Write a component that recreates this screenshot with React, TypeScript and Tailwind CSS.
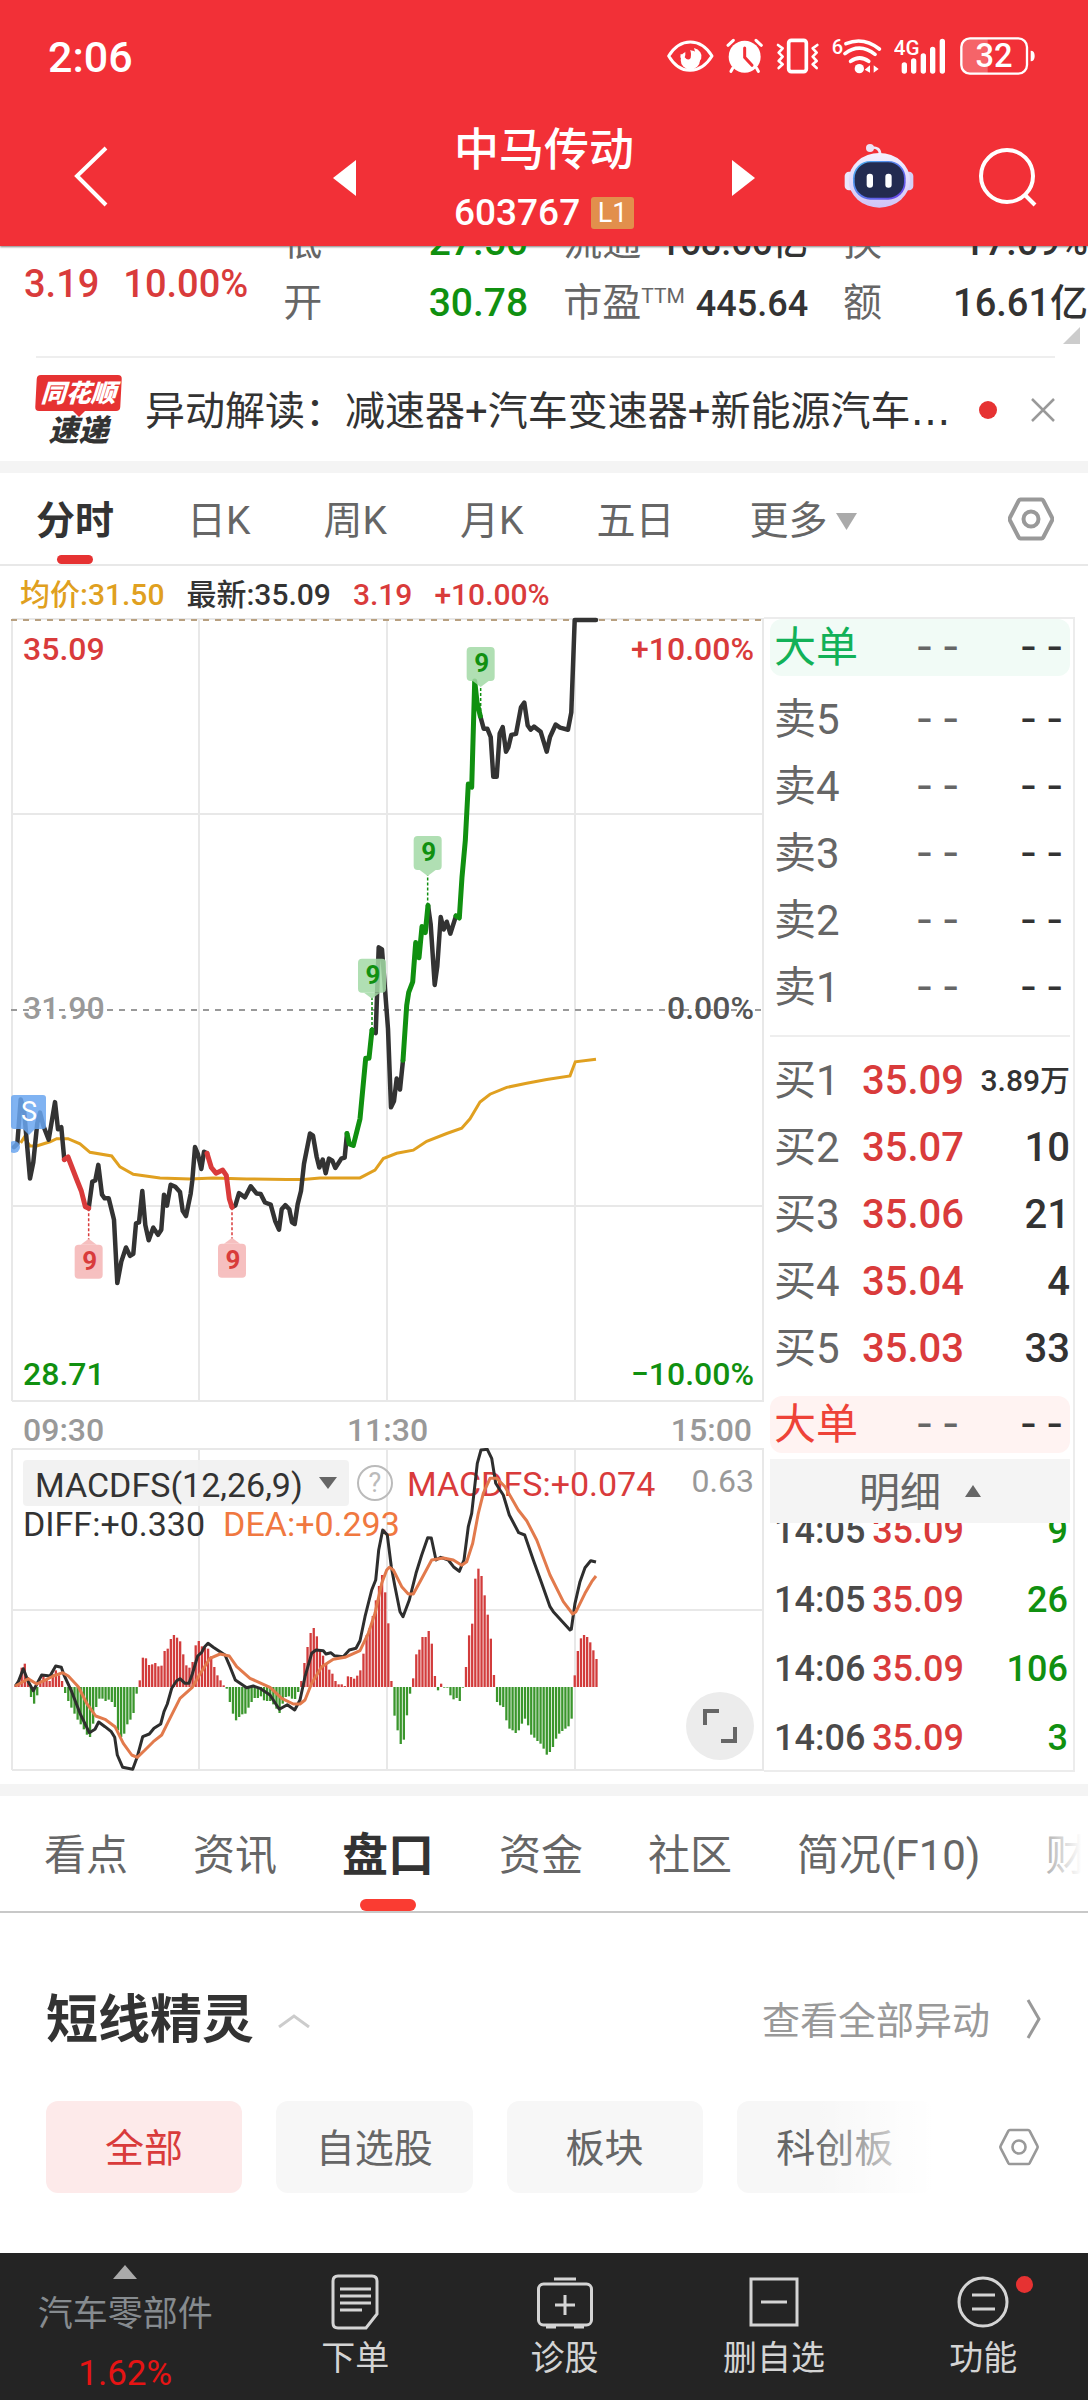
import React from 'react';

type Point = [number, number];

const RED = '#d93b3b';
const GREEN = '#109010';
const INK = '#333333';

/* ---------- chart data ---------- */

const priceSegments: { color: string; points: Point[] }[] = [
  { color: INK, points: [[42,1046],[52,1040],[62,955],[72,975],[90,1106],[100,1075],[112,1000],[120,980],[130,1005],[146,1032],[165,960],[174,1012],[184,1008],[193,1070]] },
  { color: INK, points: [[266,1163],[277,1112],[286,1110],[295,1080],[306,1137],[314,1144],[326,1144],[342,1185],[352,1306],[364,1265],[378,1238],[390,1254],[400,1250],[408,1192],[417,1190],[427,1130],[436,1195],[446,1224],[460,1200],[474,1214],[484,1204],[492,1137],[501,1158],[512,1118],[526,1122],[540,1132],[548,1168],[558,1178],[572,1135],[577,1110],[585,1046],[594,1060],[604,1088],[612,1055],[621,1058]] },
  { color: INK, points: [[696,1161],[706,1158],[717,1134],[735,1142],[752,1121],[770,1135],[782,1136],[795,1152],[812,1156],[826,1188],[837,1204],[845,1165],[856,1157],[868,1165],[876,1190],[884,1193],[893,1155],[903,1130],[912,1078],[930,1020],[939,1024],[950,1065],[958,1085],[968,1070],[977,1096],[987,1068],[997,1072],[1006,1086],[1024,1068],[1034,1066],[1041,1020]] },
  { color: INK, points: [[1116,822],[1127,828],[1136,664],[1146,668],[1164,820],[1173,970],[1182,958],[1190,915],[1200,936],[1209,880]] },
  { color: INK, points: [[1284,584],[1292,620],[1304,736],[1312,700],[1322,606],[1331,630],[1340,615],[1351,638],[1368,604]] },
  { color: INK, points: [[1441,222],[1451,246],[1462,246],[1472,262],[1480,338],[1490,338],[1499,255],[1508,243],[1518,290],[1525,282],[1534,258],[1548,256],[1563,205],[1573,196],[1583,240],[1592,248],[1602,242],[1622,252],[1640,290],[1650,262],[1667,238],[1680,244],[1704,248],[1714,215],[1724,38],[1788,38]] },
  { color: RED, points: [[193,1070],[204,1065],[230,1108],[244,1130],[256,1160],[266,1163]] },
  { color: RED, points: [[621,1058],[634,1085],[648,1096],[668,1090],[679,1100],[688,1145],[696,1161]] },
  { color: GREEN, points: [[1041,1020],[1048,1040],[1060,1043],[1080,992],[1097,876],[1107,876],[1116,822]] },
  { color: GREEN, points: [[1209,880],[1220,775],[1226,750],[1238,730],[1247,655],[1257,684],[1266,624],[1276,636],[1284,584]] },
  { color: GREEN, points: [[1368,604],[1378,608],[1386,530],[1396,460],[1405,352],[1415,358],[1424,155],[1431,195],[1441,222]] },
];

const averagePoints: Point[] = [[62,1038],[72,1028],[90,1044],[110,1044],[150,1036],[170,1030],[204,1030],[240,1040],[270,1056],[335,1063],[360,1084],[400,1098],[480,1105],[570,1107],[640,1105],[740,1107],[860,1108],[910,1108],[960,1105],[1080,1105],[1125,1090],[1150,1068],[1190,1058],[1240,1052],[1280,1035],[1340,1020],[1385,1010],[1410,992],[1440,960],[1470,945],[1520,932],[1580,924],[1640,917],[1710,910],[1726,883],[1788,878]];

const diffPoints: Point[] = [[46,858],[55,845],[70,806],[85,845],[100,872],[112,850],[125,825],[150,828],[167,798],[184,802],[192,825],[215,875],[240,940],[268,998],[285,988],[296,966],[315,980],[334,995],[344,1012],[352,1065],[368,1102],[398,1108],[412,1070],[428,1010],[448,1002],[462,985],[482,972],[492,935],[502,912],[515,865],[530,842],[540,836],[555,850],[567,850],[577,822],[593,768],[605,757],[614,740],[624,730],[640,742],[675,765],[690,800],[706,840],[740,863],[760,858],[782,866],[810,885],[838,928],[862,914],[884,930],[900,900],[915,830],[935,760],[948,750],[970,752],[978,762],[992,758],[1003,767],[1030,770],[1048,750],[1068,745],[1080,722],[1095,650],[1115,570],[1127,540],[1136,450],[1148,390],[1162,405],[1174,500],[1185,560],[1200,635],[1209,650],[1228,600],[1248,520],[1265,465],[1283,413],[1294,414],[1308,480],[1322,472],[1345,480],[1362,502],[1378,514],[1392,480],[1405,380],[1415,340],[1432,190],[1443,150],[1462,148],[1475,175],[1487,250],[1500,270],[1510,285],[1528,345],[1556,398],[1574,405],[1600,480],[1625,550],[1650,620],[1660,635],[1710,690],[1714,688],[1725,610],[1740,545],[1755,503],[1772,482],[1788,486]];

const deaPoints: Point[] = [[46,858],[85,836],[110,852],[140,838],[160,828],[188,818],[205,828],[235,860],[260,910],[287,948],[315,958],[345,980],[370,1030],[395,1065],[412,1072],[435,1050],[460,1025],[485,1005],[505,965],[540,895],[577,862],[600,822],[630,775],[660,762],[688,768],[710,800],[750,835],[810,862],[845,895],[880,912],[900,912],[915,900],[935,850],[965,800],[1000,778],[1035,772],[1080,752],[1105,700],[1125,640],[1145,550],[1160,510],[1168,502],[1180,510],[1205,560],[1225,582],[1240,582],[1260,545],[1295,480],[1330,474],[1360,480],[1385,496],[1400,485],[1418,430],[1435,340],[1450,280],[1470,235],[1490,235],[1515,260],[1555,330],[1580,362],[1610,420],[1650,525],[1690,605],[1718,642],[1728,635],[1755,580],[1775,545],[1788,528]];

const macdBars = [
  4,12,58,70,30,-30,-50,-25,20,35,22,18,38,50,35,18,-18,-42,-62,-80,-98,-112,-127,-143,-150,-110,-60,-35,-35,-42,-38,-45,-60,-130,-150,-140,-112,-98,-78,-20,
  20,88,86,66,68,72,62,64,108,115,144,156,148,137,98,65,58,75,125,138,122,118,115,92,60,35,20,5,-5,-45,-80,-100,-90,-82,-80,-62,-45,-33,-33,-28,-40,-42,-42,-52,-65,-78,-50,-30,-28,-35,-36,-15,
  18,72,120,162,177,152,108,94,72,52,40,18,8,8,3,32,30,25,34,50,100,155,177,213,260,303,336,284,191,18,-86,-130,-171,-158,-85,-20,
  26,98,112,150,150,168,130,33,-10,10,-2,-2,-25,-37,-33,-42,-2,60,155,190,325,355,333,275,217,145,36,-45,-55,-60,-100,-125,-130,-138,-130,-110,-95,-115,-143,-152,-162,-170,-185,-203,-195,-180,-155,-140,-132,-125,-118,-95,
  35,108,146,156,150,134,110,84,
];

const px = (x: number) => x / 3 - 11;
const priceY = (y: number) => y / 1.912 - 17;
const macdY = (y: number) => y / 3 - 48;

const polyline = (points: Point[], toY: (y: number) => number) =>
  points.map(([x, y]) => `${px(x).toFixed(1)},${toY(y).toFixed(1)}`).join(' ');

/* ---------- icons ---------- */

function HexIcon({ className, stroke }: { className: string; stroke: number }) {
  return (
    <svg className={className} viewBox="0 0 46 46" fill="none" stroke="#999" strokeWidth={stroke} strokeLinejoin="round" aria-hidden="true">
      <path d="M12.5 3.5h21a2 2 0 0 1 1.700 1L44 21.500a3 3 0 0 1 0 3L35.200 41.500a2 2 0 0 1-1.700 1h-21a2 2 0 0 1-1.700-1L2 24.500a3 3 0 0 1 0-3L10.800 4.500a2 2 0 0 1 1.700-1z" />
      <circle cx="23" cy="23" r="7.500" />
    </svg>
  );
}

function StatusIcons() {
  return (
    <div className="flex items-center gap-3 text-white" aria-label="系统状态">
      <svg className="h-[42px] w-[48px]" viewBox="16 45 144 126" fill="none">
        <path d="M24 108Q50 66 89 66T154 108Q128 150 89 151T24 108Z" stroke="#fff" strokeWidth="9" strokeLinejoin="round" />
        <path d="M60 102a32 26 0 1 0 40-18q10 24-12 28-14 1-16-12-6 4-12 2z" fill="#fff" />
        <circle cx="89" cy="120" r="29" fill="#fff" />
        <path d="M68 78q28 4 22 36-8 10-18-2 6-14-4-34z" fill="#f23037" />
      </svg>
      <svg className="h-[42px] w-[38px]" viewBox="200 45 114 126" fill="none" stroke="#fff" strokeLinecap="round">
        <circle cx="256" cy="110" r="48" fill="#fff" stroke="none" />
        <path d="M206 76l16-15M306 76l-16-15M220 145l-5 9M292 145l5 9" strokeWidth="9" />
        <path d="M256 84v28l22 24" stroke="#f23037" strokeWidth="9" />
      </svg>
      <svg className="h-[42px] w-[44px]" viewBox="353 45 132 126" fill="none" stroke="#fff" strokeLinejoin="round" strokeLinecap="round">
        <rect x="391" y="61" width="53" height="94" rx="8" strokeWidth="11" />
        <path d="M359 75l14 10-12 13 12 12-12 13 12 10-12 11M477 75l-14 10 12 13-12 12 12 13-12 10 12 11" strokeWidth="8" />
      </svg>
      <svg className="h-[42px] w-[50px]" viewBox="518 45 150 126" fill="none" stroke="#fff" strokeLinecap="round">
        <text x="517" y="101" fill="#fff" stroke="none" fontSize="60" fontWeight="500" className="font-['Roboto']">6</text>
        <path d="M560 71q52-22 100 16M557 101q44-34 90 2M574 124q27-20 54 0" strokeWidth="11" />
        <circle cx="600" cy="146" r="14" fill="#fff" stroke="none" />
        <path d="M632 136v22l-16-9zM643 136v22l15-11z" fill="#fff" stroke="none" />
      </svg>
      <svg className="h-[42px] w-[52px]" viewBox="702 45 156 126" fill="none" stroke="#fff" strokeLinecap="round">
        <text x="701" y="106" fill="#fff" stroke="none" fontSize="62" fontWeight="500" className="font-['Roboto']">4G</text>
        <path d="M733 135v18M761 123v30M790 108v45M818 88v65M847 64v89" strokeWidth="16" />
      </svg>
      <svg className="ml-0.5 h-[42px] w-[76px]" viewBox="897 45 228 126" fill="none">
        <path d="M925 53h55v110h-55q-26 0-26-26V79q0-26 26-26z" fill="#fff" opacity=".25" />
        <rect x="901" y="55" width="197" height="106" rx="26" stroke="#fff" strokeWidth="7" />
        <path d="M1109 92q12 0 12 16t-12 16z" fill="#fff" />
        <text x="999" y="142" textAnchor="middle" fill="#fff" fontSize="98" fontWeight="500" className="font-['Roboto']">32</text>
      </svg>
    </div>
  );
}

function Robot() {
  return (
    <svg className="h-[66px] w-[70px]" viewBox="550 366 210 198" aria-hidden="true">
      <defs>
        <linearGradient id="shell" x1="0" y1="0" x2="0" y2="1">
          <stop offset="0" stopColor="#f5f1ff" />
          <stop offset="1" stopColor="#cfc4f6" />
        </linearGradient>
        <linearGradient id="visor" x1="0" y1="0" x2="1" y2="1">
          <stop offset="0" stopColor="#4bb4f0" />
          <stop offset="1" stopColor="#6a3ee6" />
        </linearGradient>
      </defs>
      <path d="M628 380q32-4 30 22" fill="none" stroke="#efe9fc" strokeWidth="8" />
      <circle cx="628" cy="381" r="12" fill="#ece2f6" />
      <rect x="552" y="452" width="30" height="56" rx="13" fill="#eae6fb" />
      <rect x="728" y="452" width="30" height="56" rx="13" fill="#d5d0f6" />
      <ellipse cx="656" cy="478" rx="92" ry="82" fill="url(#shell)" />
      <rect x="577" y="420" width="158" height="116" rx="52" fill="url(#visor)" />
      <rect x="582" y="424" width="148" height="106" rx="48" fill="#232b50" />
      <rect x="618" y="458" width="19" height="42" rx="9" fill="#fff" />
      <rect x="674" y="458" width="19" height="42" rx="9" fill="#fff" />
    </svg>
  );
}

/* ---------- header ---------- */

function Header() {
  return (
    <header className="relative bg-[#f23037] text-white shadow-[0_1px_2px_rgba(0,0,0,0.5)]">
      <div className="flex h-[112px] items-center justify-between pl-12 pr-[52px]">
        <time className="pt-0.5 text-[43px] font-medium leading-none">2:06</time>
        <StatusIcons />
      </div>
      <div className="grid h-[134px] grid-cols-[1fr_auto_1fr] items-center pb-1">
        <button type="button" aria-label="返回" className="ml-[72px] w-10">
          <svg className="h-[66px] w-10" viewBox="0 0 40 66" fill="none" stroke="#fff" strokeWidth="4">
            <path d="M34 3L5 31l29 29" />
          </svg>
        </button>
        <div className="flex items-center gap-[98px]">
          <button type="button" aria-label="上一只">
            <svg className="h-9 w-[23px]" viewBox="0 0 23 36" fill="#fff"><path d="M23 0v36L0 18z" /></svg>
          </button>
          <div className="flex flex-col pt-2">
            <h1 className="text-[45px] font-medium leading-[62px]">中马传动</h1>
            <div className="flex items-center justify-between leading-[62px]">
              <span className="text-[37px] font-medium">603767</span>
              <span className="flex h-8 w-[43px] items-center justify-center rounded-[3px] bg-[#e28f4c] text-[27px] leading-none">L1</span>
            </div>
          </div>
          <button type="button" aria-label="下一只">
            <svg className="h-9 w-[23px]" viewBox="0 0 23 36" fill="#fff"><path d="M0 0v36l23-18z" /></svg>
          </button>
        </div>
        <div className="flex items-center justify-end gap-16 pr-[50px]">
          <button type="button" aria-label="智能助手" className="pb-1"><Robot /></button>
          <button type="button" aria-label="搜索">
            <svg className="h-[60px] w-[60px]" viewBox="0 0 60 60" fill="none" stroke="#fff" strokeWidth="4">
              <circle cx="29" cy="28" r="26" />
              <path d="M46 46l11 11" />
            </svg>
          </button>
        </div>
      </div>
    </header>
  );
}

function StatPair({ label, sup, value, className }: { label: string; sup?: string; value: string; className: string }) {
  return (
    <div className="flex h-[61px] items-center justify-between whitespace-nowrap">
      <dt className="flex text-[39px] leading-none text-[#666]">
        {label}
        {sup && <sup className="top-0 text-[21px] leading-6">{sup}</sup>}
      </dt>
      <dd className={className}>{value}</dd>
    </div>
  );
}

function Quote() {
  return (
    <section className="relative h-[110px] overflow-hidden">
      <div className="grid grid-cols-[248fr_245fr_245fr_245fr] gap-x-[35px]">
        <div className="flex h-[76px] items-center gap-6 whitespace-nowrap pl-6 text-[38px] font-medium text-[#d93b3b]">
          <span>3.19</span>
          <span>10.00%</span>
        </div>
        <dl className="-mt-[34px]">
          <StatPair label="低" value="27.50" className="text-[39px] font-medium text-[#109010]" />
          <StatPair label="开" value="30.78" className="text-[39px] font-medium text-[#109010]" />
        </dl>
        <dl className="-mt-[34px]">
          <StatPair label="流通" value="168.66亿" className="text-[36px] font-medium text-[#333]" />
          <StatPair label="市盈" sup="TTM" value="445.64" className="text-[36px] font-medium text-[#333]" />
        </dl>
        <dl className="-mt-[34px]">
          <StatPair label="换" value="17.09%" className="text-[38px] font-medium text-[#333]" />
          <StatPair label="额" value="16.61亿" className="text-[38px] font-medium text-[#333]" />
        </dl>
      </div>
      <svg className="absolute bottom-3 right-2 size-[17px]" viewBox="0 0 17 17" fill="#ccc"><path d="M17 0v17H0z" /></svg>
    </section>
  );
}

function News() {
  return (
    <section className="ml-9 mr-[33px] flex h-[105px] items-center border-t-2 border-[#eee]">
      <div className="flex w-[85px] flex-col items-center italic">
        <span className="flex h-9 w-full -skew-x-3 items-center justify-center rounded-[4px] bg-[#e63232] text-[25px] font-black leading-none text-white">同花顺</span>
        <svg className="h-1.5 w-3" viewBox="0 0 12 6" fill="#e63232"><path d="M0 0h12L6 6z" /></svg>
        <span className="text-[30px] font-black leading-[28px] text-[#333]">速递</span>
      </div>
      <a href="#news" className="ml-6 min-w-0 flex-1 overflow-hidden whitespace-nowrap pt-1 text-[40px] text-[#333]">
        异动解读：减速器+汽车变速器+新能源汽车<span className="font-['DejaVu_Sans']">…</span>
      </a>
      <span className="ml-2 size-[18px] rounded-full bg-[#e63232]" />
      <button type="button" aria-label="关闭" className="ml-[34px]">
        <svg className="size-6" viewBox="0 0 24 24" stroke="#999" strokeWidth="2.500"><path d="M1 1l22 22M23 1L1 23" /></svg>
      </button>
    </section>
  );
}

function ChartTabs() {
  const tabs = ['分时', '日K', '周K', '月K', '五日'];
  return (
    <nav className="flex h-[93px] items-stretch gap-[73px] border-b-2 border-[#e8e8e8] pl-9 pr-[34px] text-[39px] text-[#666]">
      {tabs.map((tab, i) => (
        <button key={tab} type="button" className={i === 0 ? 'relative pt-1.5 font-bold text-[#333]' : 'relative pt-1.5'}>
          {tab}
          {i === 0 && <span className="absolute bottom-0 left-1/2 h-[9px] w-9 -translate-x-1/2 rounded-full bg-[#e63232]" />}
        </button>
      ))}
      <button type="button" className="ml-0.5 flex items-center gap-2 pt-1.5">
        更多
        <svg className="h-[17px] w-[21px]" viewBox="0 0 21 17" fill="#aaa"><path d="M0 0h21L10.500 17z" /></svg>
      </button>
      <button type="button" aria-label="图表设置" className="ml-auto"><HexIcon className="size-[46px]" stroke={4} /></button>
    </nav>
  );
}

/* ---------- charts ---------- */

function Flag({ x, top, up, from }: { x: number; top: number; up?: boolean; from: number }) {
  const cx = px(x);
  const y = priceY(top);
  const color = up ? RED : GREEN;
  const fill = up ? '#f5b5b5' : '#a3daa6';
  return (
    <g>
      <line x1={cx} x2={cx} y1={priceY(from)} y2={up ? y - 5 : y + 39} stroke={color} strokeWidth="1.500" strokeDasharray="3 2" />
      <g opacity="0.850">
        <rect x={cx - 14} y={y} width="28" height="34" rx="4" fill={fill} />
        <path d={up ? `M${cx - 8} ${y}L${cx} ${y - 6}L${cx + 8} ${y}z` : `M${cx - 8} ${y + 34}L${cx} ${y + 40}L${cx + 8} ${y + 34}z`} fill={fill} />
      </g>
      <text x={cx + 1} y={y + 25} textAnchor="middle" fontSize="26" fontWeight="700" fill={color}>9</text>
    </g>
  );
}

function PriceChart() {
  return (
    <div className="relative">
      <svg className="block w-full" viewBox="0 0 753 785" fill="none" role="img" aria-label="分时走势图">
        <g stroke="#e8e8e8" strokeWidth="2">
          <path d="M1 2h752M1 197h752M1 589h752M1 784h752" />
          <path d="M1 2v782M188 2v782M376 2v782M564 2v782M752 2v782" />
        </g>
        <path d="M0 3h752" stroke="#b8a080" strokeWidth="2" strokeDasharray="6 6" />
        <path d="M0 393h752" stroke="#999" strokeWidth="2" strokeDasharray="6 6" />
        <polyline points={polyline(averagePoints, priceY)} stroke="#e0a020" strokeWidth="3" />
        {priceSegments.map((s, i) => (
          <polyline key={i} points={polyline(s.points, priceY)} stroke={s.color} strokeWidth={s.color === INK ? 4.5 : 5} strokeLinejoin="round" strokeLinecap="round" />
        ))}
        <Flag x={266} top={1233} from={1163} up />
        <Flag x={696} top={1231} from={1161} up />
        <Flag x={1116} top={686} from={822} />
        <Flag x={1283} top={451} from={584} />
        <Flag x={1442} top={90} from={222} />
        <g opacity="0.850" fill="#6aa6f0">
          <rect x="0" y="478" width="35" height="34" rx="3" />
          <path d="M11 511h14l-7 7z" />
          <circle cx="3" cy="530" r="6" />
        </g>
        <text x="18" y="504" textAnchor="middle" fontSize="27" fill="#fff">S</text>
      </svg>
      <div className="pointer-events-none absolute inset-0 text-[32px] font-medium leading-8">
        <span className="absolute left-3 top-4 text-[#d93b3b]">35.09</span>
        <span className="absolute right-2.5 top-4 text-[#d93b3b]">+10.00%</span>
        <span className="absolute left-3 top-[375px] text-[#999]">31.90</span>
        <span className="absolute right-2.5 top-[375px] text-[#555]">0.00%</span>
        <span className="absolute bottom-3 left-3 text-[#109010]">28.71</span>
        <span className="absolute bottom-3 right-2.5 text-[#109010]">−10.00%</span>
      </div>
    </div>
  );
}

function MacdChart() {
  const step = (1789 - 46) / (macdBars.length - 1);
  const zero = macdY(861);
  return (
    <div className="relative">
      <svg className="block w-full" viewBox="0 0 753 324" fill="none" role="img" aria-label="MACD 指标图">
        <g stroke="#e8e8e8" strokeWidth="2">
          <path d="M1 1h752M1 162h752M1 322h752" />
          <path d="M1 1v321M188 1v321M376 1v321M564 1v321M752 1v321" />
        </g>
        {macdBars.map((v, i) => (
          <rect
            key={i}
            x={px(46 + i * step) - 1}
            y={v > 0 ? zero - v / 3 : zero}
            width="2.300"
            height={Math.abs(v) / 3}
            fill={v > 0 ? '#d23c3c' : '#3a962c'}
          />
        ))}
      </svg>
      <button type="button" className="absolute left-3 top-3 flex h-[46px] w-[326px] items-center justify-between rounded-[4px] bg-[#f1f1f1]/90 px-3 pt-1 text-[34px] leading-none text-[#333]">
        MACDFS(12,26,9)
        <svg className="mb-1 h-3 w-[18px]" viewBox="0 0 18 12" fill="#666"><path d="M0 0h18L9 12z" /></svg>
      </button>
      <button type="button" aria-label="指标说明" className="absolute left-[346px] top-[17px] flex size-9 items-center justify-center rounded-full border-2 border-[#bbb] text-[27px] leading-none text-[#bbb]">?</button>
      <span className="absolute left-[396px] top-[19px] text-[34px] leading-[34px] text-[#d93b3b]">MACDFS:+0.074</span>
      <span className="absolute right-2.5 top-4 text-[32px] leading-[34px] text-[#999]">0.63</span>
      <div className="absolute left-3 top-[59px] flex gap-[18px] text-[34px] leading-[34px]">
        <span className="text-[#333]">DIFF:+0.330</span>
        <span className="text-[#f07840]">DEA:+0.293</span>
      </div>
      <svg className="pointer-events-none absolute inset-0 w-full" viewBox="0 0 753 324" fill="none" strokeLinejoin="round" aria-hidden="true">
        <polyline points={polyline(diffPoints, macdY)} stroke="#2e2e2e" strokeWidth="3" />
        <polyline points={polyline(deaPoints, macdY)} stroke="#e27a4c" strokeWidth="3" />
      </svg>
      <button type="button" aria-label="全屏" className="absolute bottom-3 right-2.5 flex size-[68px] items-center justify-center rounded-full bg-[#ececec]">
        <svg className="size-9" viewBox="0 0 36 36" fill="none" stroke="#666" strokeWidth="4"><path d="M3 17V3h14M33 19v14H19" /></svg>
      </button>
    </div>
  );
}

/* ---------- order book ---------- */

const buys = [
  ['买1', '35.09', '3.89万'],
  ['买2', '35.07', '10'],
  ['买3', '35.06', '21'],
  ['买4', '35.04', '4'],
  ['买5', '35.03', '33'],
];

const trades = [
  ['14:05', '35.09', '9'],
  ['14:05', '35.09', '26'],
  ['14:06', '35.09', '106'],
  ['14:06', '35.09', '3'],
];

function Dashes({ dark }: { dark?: boolean }) {
  return <span className={dark ? "font-['Liberation_Mono'] text-[44px] leading-none text-[#333]" : "font-['Liberation_Mono'] text-[44px] leading-none text-[#666]"}>--</span>;
}

function BigOrder({ className }: { className: string }) {
  return (
    <div className={className}>
      <span className="w-[88px]">大单</span>
      <span className="w-[102px] text-right"><Dashes /></span>
      <span className="flex-1 text-right"><Dashes dark /></span>
    </div>
  );
}

function OrderBook() {
  return (
    <aside className="flex flex-col border-2 border-l-0 border-[#ececec] pl-1.5 pr-[3px]">
      <BigOrder className="flex h-[57px] items-center rounded-xl bg-[#f1fbf6] pl-1 pr-0.5 text-[42px] leading-none text-[#12b158]" />
      <table className="ml-1 mt-2.5 table-fixed text-[42px] leading-none text-[#666]">
        <tbody>
          {['卖5', '卖4', '卖3', '卖2', '卖1'].map((label) => (
            <tr key={label} className="h-[67px]">
              <th scope="row" className="w-[80px] p-0 text-left font-normal">{label}</th>
              <td className="w-[110px] p-0 text-right"><Dashes /></td>
              <td className="p-0 pr-0.5 text-right"><Dashes dark /></td>
            </tr>
          ))}
        </tbody>
      </table>
      <hr className="mt-3.5 border-t-2 border-[#eee]" />
      <table className="ml-1 mt-2.5 table-fixed text-[42px] leading-none">
        <tbody>
          {buys.map(([label, price, qty]) => (
            <tr key={label} className="h-[67px] whitespace-nowrap">
              <th scope="row" className="w-[80px] p-0 text-left font-normal text-[#666]">{label}</th>
              <td className="w-[110px] p-0 text-right text-[40px] font-medium text-[#d93b3b]">{price}</td>
              <td className={qty.length > 3 ? 'p-0 text-right text-[30px] font-medium text-[#333]' : 'p-0 text-right text-[40px] font-medium text-[#333]'}>{qty}</td>
            </tr>
          ))}
        </tbody>
      </table>
      <BigOrder className="mt-3.5 flex h-[57px] items-center rounded-xl bg-[#fff3f2] pl-1 pr-0.5 text-[42px] leading-none text-[#ee4238]" />
      <button type="button" className="mt-1.5 flex h-16 items-center justify-center gap-6 bg-[#f4f4f4] pt-1 text-[41px] leading-none text-[#666]">
        明细
        <svg className="mb-1 h-3 w-4" viewBox="0 0 16 12" fill="#666"><path d="M0 12h16L8 0z" /></svg>
      </button>
      <div className="flex h-[245px] flex-col justify-end overflow-hidden pl-1">
        <table className="-mb-1 w-full table-fixed text-[36px] font-medium leading-none">
          <tbody>
            {trades.map(([time, price, qty], i) => (
              <tr key={i} className="h-[69px]">
                <td className="w-[92px] p-0 text-[#4a4a4a]">{time}</td>
                <td className="w-[98px] p-0 text-right text-[#d93b3b]">{price}</td>
                <td className="p-0 pr-0.5 text-right text-[#109010]">{qty}</td>
              </tr>
            ))}
          </tbody>
        </table>
      </div>
    </aside>
  );
}

/* ---------- lower part ---------- */

function InfoTabs() {
  const tabs = ['看点', '资讯', '盘口', '资金', '社区', '简况(F10)', '财务'];
  return (
    <nav className="relative flex h-[117px] gap-[65px] overflow-hidden whitespace-nowrap border-b-2 border-[#c8c8c8] pl-11 text-[42px] text-[#666]">
      {tabs.map((tab) => (
        <button key={tab} type="button" className={tab === '盘口' ? 'relative shrink-0 pt-1 text-[46px] font-bold text-[#333]' : 'shrink-0 pt-1'}>
          {tab}
          {tab === '盘口' && <span className="absolute bottom-0 left-1/2 h-3 w-14 -translate-x-1/2 rounded-full bg-[#fa3c32]" />}
        </button>
      ))}
      <span className="pointer-events-none absolute inset-y-0 right-0 w-16 bg-gradient-to-r from-white/20 to-white to-90%" />
    </nav>
  );
}

function ShortTerm() {
  const chips = ['全部', '自选股', '板块', '科创板'];
  return (
    <section className="pb-[60px]">
      <div className="flex h-[188px] items-center pl-[46px] pr-[46px] pt-7">
        <h2 className="text-[52px] font-bold text-[#333]">短线精灵</h2>
        <svg className="ml-6 h-3.5 w-8" viewBox="0 0 32 14" fill="none" stroke="#ccc" strokeWidth="3"><path d="M1 13L16 2l15 11" /></svg>
        <a href="#all" className="ml-auto flex items-center gap-9 text-[38px] text-[#999]">
          查看全部异动
          <svg className="mb-1 h-10 w-4" viewBox="0 0 16 40" fill="none" stroke="#999" strokeWidth="3"><path d="M2 1l11 19L2 39" /></svg>
        </a>
      </div>
      <div className="flex items-center pl-[46px] pr-[49px]">
        <div className="relative grid flex-1 grid-cols-4 gap-[34px] text-[39px]">
          {chips.map((chip, i) => (
            <button key={chip} type="button" className={i === 0 ? 'h-[92px] rounded-xl bg-[#fdeaea] pt-1 text-[#d93b3b]' : 'h-[92px] rounded-xl bg-[#f7f7f7] pt-1 text-[#666]'}>
              {chip}
            </button>
          ))}
          <span className="pointer-events-none absolute inset-y-0 right-0 w-[120px] bg-gradient-to-r from-white/0 to-white" />
        </div>
        <button type="button" aria-label="筛选设置" className="ml-[66px]"><HexIcon className="size-10" stroke={3} /></button>
      </div>
    </section>
  );
}

function BottomNav() {
  const items: { label: string; icon: React.ReactNode; dot?: boolean }[] = [
    { label: '下单', icon: <><path d="M11 2h34q5 0 5 5v33L39 54H11q-5 0-5-5V7q0-5 5-5z" /><path d="M13 15h31M13 22h31M13 29h31M13 36h22" /></> },
    { label: '诊股', icon: <><rect x="1.500" y="10" width="53" height="41" rx="5" /><path d="M17 5h22M28 21v20M18 31h20M9 53h10M37 53h10" /></> },
    { label: '删自选', icon: <><rect x="5" y="5" width="46" height="46" /><path d="M15 28h26" /></> },
    { label: '功能', icon: <><circle cx="28" cy="28" r="24" /><path d="M17 21h23M17 35h23" /></>, dot: true },
  ];
  return (
    <nav className="grid h-[147px] grid-cols-[250fr_209fr_209fr_209fr_209fr] bg-[#242424] text-[#d4d4d4]">
      <button type="button" className="flex flex-col items-center pt-3 text-[35px] leading-none">
        <svg className="h-3.5 w-6" viewBox="0 0 24 14" fill="#aaa"><path d="M0 14h24L12 0z" /></svg>
        <span className="mt-[18px] text-[#868b8f]">汽车零部件</span>
        <span className="mt-6 text-[#e61414]">1.62%</span>
      </button>
      {items.map((item) => (
        <button key={item.label} type="button" className="flex flex-col items-center pt-[21px]">
          <span className="relative">
            <svg className="size-14" viewBox="0 0 56 56" fill="none" stroke="#d4d4d4" strokeWidth="3">{item.icon}</svg>
            {item.dot && <span className="absolute -right-[22px] top-0.5 size-[17px] rounded-full bg-[#e63232]" />}
          </span>
          <span className="mt-2.5 text-[34px] leading-9">{item.label}</span>
        </button>
      ))}
    </nav>
  );
}

export default function App() {
  return (
    <div className="bg-white font-['Roboto','Noto_Sans_CJK_SC',sans-serif]" lang="zh-CN">
      <Header />
      <main>
        <Quote />
        <News />
        <div className="h-3 bg-[#f4f4f4]" />
        <ChartTabs />
        <section>
          <div className="flex h-[51px] items-center gap-[22px] pl-5 pt-1.5 text-[30px] font-medium text-[#333]">
            <span className="text-[#e0a020]">均价:31.50</span>
            <span>最新:35.09</span>
            <span className="text-[#d93b3b]">3.19</span>
            <span className="text-[#d93b3b]">+10.00%</span>
          </div>
          <div className="grid grid-cols-[753fr_311fr] pl-[11px] pr-[13px]">
            <div>
              <PriceChart />
              <div className="grid h-[46px] grid-cols-3 items-center px-3 pt-1 text-[32px] font-medium text-[#999]">
                <span>09:30</span>
                <span className="text-center">11:30</span>
                <span className="text-right">15:00</span>
              </div>
              <MacdChart />
            </div>
            <OrderBook />
          </div>
        </section>
        <div className="mt-3 h-3 bg-[#f4f4f4]" />
        <InfoTabs />
        <ShortTerm />
      </main>
      <BottomNav />
    </div>
  );
}
